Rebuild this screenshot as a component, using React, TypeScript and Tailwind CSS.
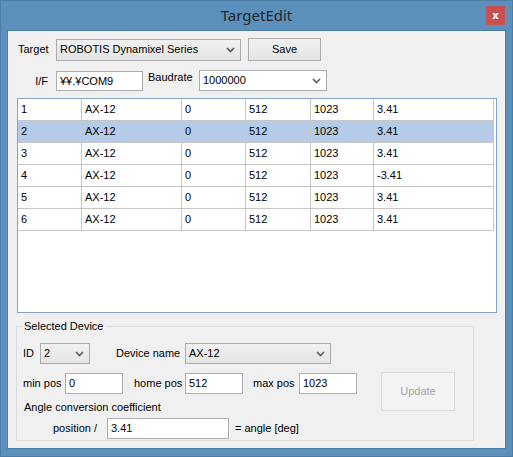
import React from "react";

const rows: (string | number)[][] = [
  [1, "AX-12", 0, 512, 1023, "3.41"],
  [2, "AX-12", 0, 512, 1023, "3.41"],
  [3, "AX-12", 0, 512, 1023, "3.41"],
  [4, "AX-12", 0, 512, 1023, "-3.41"],
  [5, "AX-12", 0, 512, 1023, "3.41"],
  [6, "AX-12", 0, 512, 1023, "3.41"],
];

const colWidths = ["w-[64px]", "w-[100px]", "w-[64px]", "w-[65px]", "w-[63px]", "w-[120px]"];

function Chevron() {
  return (
    <svg width="9" height="6" viewBox="0 0 9 6" className="shrink-0">
      <path d="M1 1l3.5 3.5L8 1" stroke="#5f5f5f" strokeWidth="1.7" fill="none" />
    </svg>
  );
}

function Combo({ value, className, white }: { value: string; className: string; white?: boolean }) {
  return (
    <div
      className={
        "flex items-center justify-between border pl-[3px] pr-[5px] " +
        (white
          ? "bg-white border-[#abadb3] "
          : "bg-gradient-to-b from-[#f0f0f0] to-[#e5e5e5] border-[#acacac] ") +
        className
      }
    >
      <span>{value}</span>
      <Chevron />
    </div>
  );
}

function TextBox({ value, className }: { value: string; className: string }) {
  return (
    <div className={"flex items-center bg-white border border-[#abadb3] pl-[3px] " + className}>
      {value}
    </div>
  );
}

export default function App() {
  return (
    <div className="w-[513px] h-[457px] bg-[#5b8fbc] border border-[#4d7ca6] flex flex-col font-['Liberation_Sans',Arial,sans-serif] text-[11px] text-black">
      {/* title bar */}
      <div className="h-[29px] shrink-0 grid grid-cols-[1fr_auto_1fr] items-start">
        <div />
        <div className="pt-[4px] font-['Noto_Sans',sans-serif] text-[15px] leading-[20px] text-[#262626]">
          TargetEdit
        </div>
        <div className="flex justify-end pr-[7px] pt-[5px]">
          <div className="w-[19px] h-[19px] bg-[#c75050] flex items-center justify-center text-white font-bold text-[10px] leading-none font-['DejaVu_Sans',sans-serif]">
            x
          </div>
        </div>
      </div>

      {/* client area */}
      <div className="ml-[6px] w-[499px] h-[419px] shrink-0 border border-[#4e7ea8] bg-[#f0f0f0] flex flex-col">
        <div className="flex items-center pt-[7px] pl-[10px]">
          <span className="w-[38px]">Target</span>
          <Combo value="ROBOTIS Dynamixel Series" className="w-[185px] h-[22px]" />
          <div className="ml-[7px] w-[73px] h-[23px] flex items-center justify-center border border-[#acacac] bg-gradient-to-b from-[#f0f0f0] to-[#e5e5e5]">
            Save
          </div>
        </div>

        <div className="flex items-start mt-[9px] pl-[10px]">
          <span className="w-[38px] text-right pr-[8px] mt-[1px] leading-[20px]">I/F</span>
          <TextBox value="¥¥.¥COM9" className="w-[87px] h-[20px] mt-[1px]" />
          <span className="w-[51px] ml-[5px] leading-[14px]">Baudrate</span>
          <Combo value="1000000" white className="w-[128px] h-[21px]" />
        </div>

        {/* device list */}
        <div className="mt-[7px] ml-[9px] w-[480px] h-[215px] border border-[#86a3c1] bg-white">
          {rows.map((r, i) => (
            <div
              key={i}
              className={"flex h-[22px] border-b border-[#c6c6c6] w-[476px] " + (i === 1 ? "bg-[#b5cbe8]" : "")}
            >
              {r.map((c, j) => (
                <div
                  key={j}
                  className={colWidths[j] + " border-r border-[#c6c6c6] pl-[3px] leading-[21px] shrink-0"}
                >
                  {c}
                </div>
              ))}
            </div>
          ))}
        </div>

        {/* selected device group */}
        <fieldset className="mt-[6px] ml-[8px] w-[458px] border border-[#dcdcdc] pb-[1px]">
          <legend className="ml-[5px] px-[2px] leading-[14px]">Selected Device</legend>

          <div className="flex items-center mt-[10px] pl-[6px]">
            <span className="w-[17px]">ID</span>
            <Combo value="2" className="w-[50px] h-[21px]" />
            <span className="ml-[26px] w-[69px]">Device name</span>
            <Combo value="AX-12" className="w-[146px] h-[21px]" />
          </div>

          <div className="flex items-start mt-[8px] pl-[6px]">
            <div className="flex flex-col">
              <div className="flex items-center mt-[1px]">
                <span className="w-[42px]">min pos</span>
                <TextBox value="0" className="w-[58px] h-[21px]" />
                <span className="ml-[11px] w-[51px]">home pos</span>
                <TextBox value="512" className="w-[58px] h-[21px]" />
                <span className="ml-[10px] w-[46px]">max pos</span>
                <TextBox value="1023" className="w-[58px] h-[21px]" />
              </div>
              <span className="mt-[6px] ml-[1px] leading-[14px]">Angle conversion coefficient</span>
            </div>
            <div className="ml-[24px] w-[74px] h-[39px] flex items-center justify-center border border-[#d9d9d9] bg-[#f4f4f4] text-[#a3a3a3]">
              Update
            </div>
          </div>

          <div className="flex items-center mt-[4px] pl-[36px]">
            <span className="w-[54px]">position /</span>
            <TextBox value="3.41" className="w-[122px] h-[21px]" />
            <span className="ml-[6px]">= angle [deg]</span>
          </div>
        </fieldset>
      </div>
    </div>
  );
}
